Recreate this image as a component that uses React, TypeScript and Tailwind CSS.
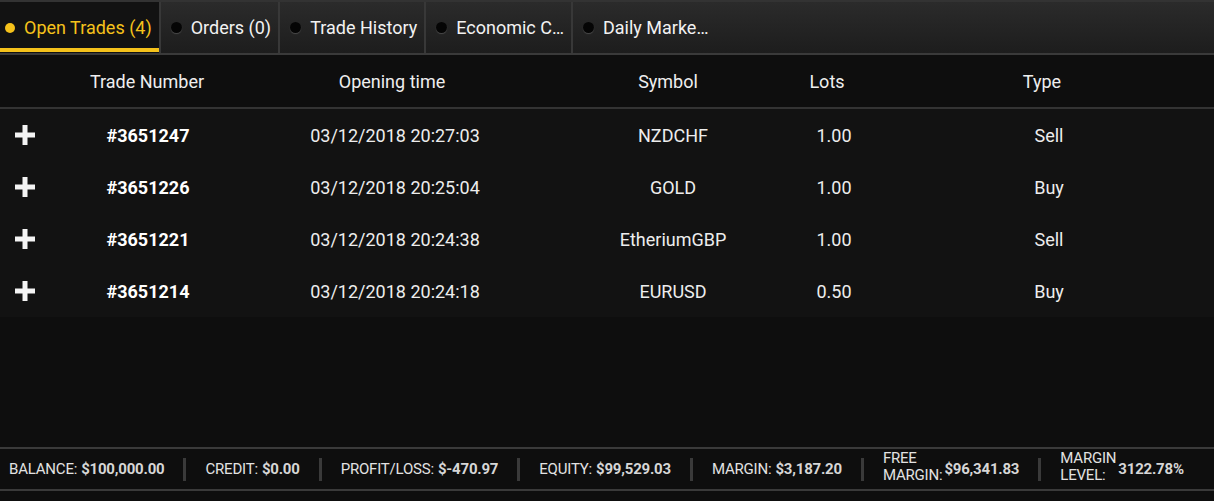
import React from "react";

type Tab = { label: string; active?: boolean };

const tabs: Tab[] = [
  { label: "Open Trades (4)", active: true },
  { label: "Orders (0)" },
  { label: "Trade History" },
  { label: "Economic C…" },
  { label: "Daily Marke…" },
];

const trades = [
  { id: "#3651247", time: "03/12/2018 20:27:03", symbol: "NZDCHF", lots: "1.00", type: "Sell" },
  { id: "#3651226", time: "03/12/2018 20:25:04", symbol: "GOLD", lots: "1.00", type: "Buy" },
  { id: "#3651221", time: "03/12/2018 20:24:38", symbol: "EtheriumGBP", lots: "1.00", type: "Sell" },
  { id: "#3651214", time: "03/12/2018 20:24:18", symbol: "EURUSD", lots: "0.50", type: "Buy" },
];

const stats = [
  { label: "BALANCE:", value: "$100,000.00" },
  { label: "CREDIT:", value: "$0.00" },
  { label: "PROFIT/LOSS:", value: "$-470.97" },
  { label: "EQUITY:", value: "$99,529.03" },
  { label: "MARGIN:", value: "$3,187.20" },
  { label: "FREE MARGIN:", value: "$96,341.83", wrap: true },
  { label: "MARGIN LEVEL:", value: "3122.78%", wrap: true },
];

const PlusIcon = () => (
  <svg width="20" height="20" viewBox="0 0 20 20" className="block">
    <rect x="7.5" y="0" width="5" height="20" fill="#f4f4f4" />
    <rect x="0" y="7.5" width="20" height="5" fill="#f4f4f4" />
  </svg>
);

const App: React.FC = () => (
  <div className="w-full h-[501px] flex flex-col bg-[#0e0e0e] font-['Roboto',sans-serif] text-[18px] text-[#efefef] overflow-hidden">
    {/* Tabs */}
    <div className="flex h-[55px] border-t-2 border-t-[#333333] border-b-2 border-b-[#3a3a3a] bg-linear-to-b from-[#2b2b2b] to-[#1d1d1d]">
      {tabs.map((t, i) => (
        <div
          key={t.label}
          className={`relative flex items-center gap-[9px] pr-[7px] ${t.active ? "pl-[5px] bg-[#121212]" : "pl-[10px]"} ${
            i < 4 ? "border-r-2 border-r-[#383838]" : ""
          }`}
        >
          {t.active ? (
            <span className="w-[10px] h-[10px] rounded-full bg-[#f5c21b]" />
          ) : (
            <span className="w-[11px] h-[11px] rounded-full bg-[#050505] shadow-[0_1px_1px_#4a4a4a]" />
          )}
          <span className={`leading-none whitespace-nowrap ${t.active ? "text-[#f5c21b]" : "text-[#f2f2f2]"}`}>
            {t.label}
          </span>
          {t.active && <span className="absolute left-0 right-0 bottom-[1px] h-[4px] bg-[#f5c21b]" />}
        </div>
      ))}
    </div>

    {/* Header */}
    <div className="grid grid-cols-[50px_194px_296px_256px_62px_1fr] h-[54px] items-center border-b-2 border-b-[#333333] text-center">
      <div />
      <div>Trade Number</div>
      <div>Opening time</div>
      <div>Symbol</div>
      <div>Lots</div>
      <div className="pl-[12px]">Type</div>
    </div>

    {/* Rows */}
    <div className="bg-[#121212]">
      {trades.map((t) => (
        <div key={t.id} className="grid grid-cols-[50px_196px_298px_258px_64px_1fr] h-[52px] items-center text-center text-[#ededed]">
          <div className="pl-[15px]">
            <PlusIcon />
          </div>
          <div className="font-bold text-white">{t.id}</div>
          <div>{t.time}</div>
          <div>{t.symbol}</div>
          <div>{t.lots}</div>
          <div className="pl-[18px]">{t.type}</div>
        </div>
      ))}
    </div>

    <div className="flex-1" />

    {/* Account summary */}
    <div className="mb-[10px] h-[44px] flex items-center border-t-2 border-t-[#3a3a3a] border-b-2 border-b-[#3a3a3a] text-[15px] tracking-[-0.2px] pl-[9px]">
      {stats.map((s, i) => (
        <React.Fragment key={s.label}>
          {i > 0 && <span className="mx-[19px] w-[3px] h-[23px] bg-[#3a3a3a]" />}
          {s.wrap ? (
            <div className="flex items-center gap-[2px] whitespace-nowrap">
              <span className="w-min whitespace-normal leading-[17px] -mt-[4px] text-[#e2e2e2]">{s.label}</span>
              <span className="font-bold text-[#d6d6d6]">{s.value}</span>
            </div>
          ) : (
            <div className="flex items-center gap-[4px] whitespace-nowrap">
              <span className="text-[#e2e2e2]">{s.label}</span>
              <span className="font-bold text-[#d6d6d6]">{s.value}</span>
            </div>
          )}
        </React.Fragment>
      ))}
    </div>
  </div>
);

export default App;
